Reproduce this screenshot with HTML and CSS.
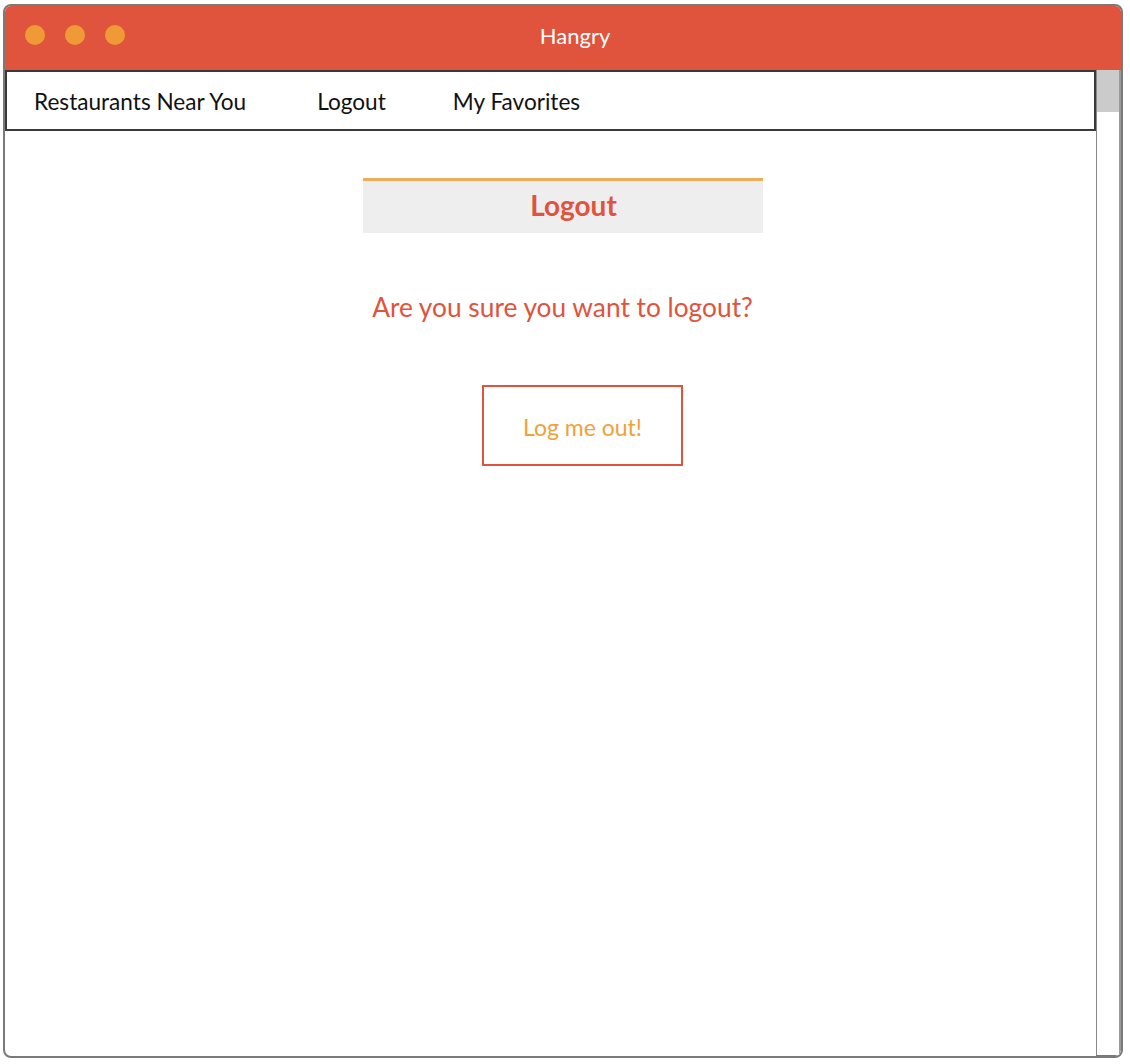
FILE: index.html
```html
<!DOCTYPE html>
<html>
<head>
<meta charset="utf-8">
<title>Hangry</title>
<link rel="stylesheet" href="styles.css">
</head>
<body>
<div class="window">
  <div class="titlebar">
    <div class="dots"><span class="dot"></span><span class="dot"></span><span class="dot"></span></div>
    <div class="title">Hangry</div>
  </div>
  <div class="viewport">
    <div class="page">
      <nav class="nav">
        <a class="nav-item nav-first">Restaurants Near You</a>
        <a class="nav-item">Logout</a>
        <a class="nav-item">My Favorites</a>
      </nav>
      <main class="content">
        <div class="header"><h1>Logout</h1></div>
        <p class="question">Are you sure you want to logout?</p>
        <button class="btn">Log me out!</button>
      </main>
    </div>
    <div class="scrollbar"><div class="thumb"></div></div>
  </div>
</div>
</body>
</html>
```
FILE: styles.css
```css
* { box-sizing: border-box; }
html, body { margin: 0; padding: 0; background: #fff; }
body {
  font-family: "Source Sans Pro", "Lato", "Noto Sans", sans-serif;
  width: 1130px;
  height: 1064px;
  padding: 4px 7px 6px 3px;
}
.window {
  height: 100%;
  border: 2px solid #7a7a7a;
  border-radius: 8px;
  overflow: hidden;
  display: flex;
  flex-direction: column;
}
.titlebar {
  height: 64px;
  background: #e0533d;
  position: relative;
  display: flex;
  align-items: center;
}
.dots { display: flex; gap: 20px; padding-left: 20px; margin-top: -6px; }
.dot { width: 20px; height: 20px; border-radius: 50%; background: #f09a37; }
.title {
  position: absolute;
  left: 0; right: 0; top: 17px;
  text-align: center;
  padding-left: 24px;
  color: #fff;
  font-size: 22px;
  line-height: 26px;
}
.viewport { flex: 1; display: flex; }
.page { flex: 1; }
.scrollbar {
  width: 25px;
  border-left: 1px solid #888;
  border-right: 2px solid #999;
  border-bottom: 1px solid #777;
  background: #fff;
}
.thumb { height: 42px; background: #cbcbcb; }
.nav {
  height: 61px;
  border: 2px solid #3a3a3a;
  display: flex;
  align-items: center;
  padding-left: 27px;
  padding-top: 2px;
}
.nav-item {
  color: #111;
  font-size: 22.6px;
  margin-right: 67px;
}
.nav-first { margin-right: 71px; }
.content { display: flex; flex-direction: column; align-items: center; padding-top: 47px; }
.header {
  width: 400px;
  height: 55px;
  margin-left: 24px;
  background: #eeeeee;
  border-top: 3px solid #f0ac5a;
  display: flex;
  align-items: center;
  justify-content: center;
  padding-left: 22px;
  padding-bottom: 5px;
}
.header h1 {
  margin: 0;
  color: #e0533d;
  font-size: 28px;
  font-weight: 700;
}
.question {
  margin: 58px 0 0 24px;
  color: #e0533d;
  font-size: 26.3px;
  line-height: 32px;
}
.btn {
  margin-top: 62px;
  margin-left: 64px;
  width: 201px;
  height: 81px;
  border: 2px solid #e0533d;
  background: #fff;
  color: #f0a13a;
  font-family: inherit;
  font-size: 23px;
  padding: 0;
  padding-top: 2px;
}
```
